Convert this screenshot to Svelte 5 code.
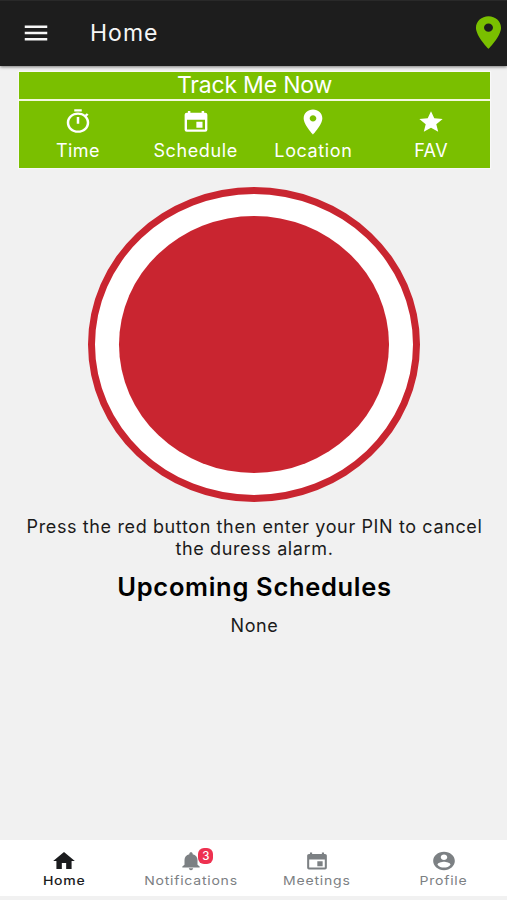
<script>
	const calendar =
		'M5.5 2.6h2v1.7h9V2.6h2v1.7H19.4q1.7 0 1.7 1.8v13.3q0 1.8-1.7 1.8H4.6q-1.7 0-1.7-1.8V6.1q0-1.8 1.7-1.8h.9zM4.8 10.4v8.8h14.4v-8.8zM12.3 12.3h4.9v5.3h-4.9z';
	const pin =
		'M12 2C8.13 2 5 5.13 5 9c0 5.25 7 13 7 13s7-7.75 7-13c0-3.87-3.13-7-7-7zm0 9.5c-1.38 0-2.5-1.12-2.5-2.5s1.12-2.5 2.5-2.5 2.5 1.12 2.5 2.5-1.12 2.5-2.5 2.5z';

	const actions = [
		{
			label: 'Time',
			name: 'time',
			path: 'M15 1H9v2h6V1zm-4 13h2V8h-2v6zm8.03-6.61l1.42-1.42c-.43-.51-.9-.99-1.41-1.41l-1.42 1.42C16.07 4.74 14.12 4 12 4c-4.97 0-9 4.03-9 9s4.02 9 9 9 9-4.03 9-9c0-2.12-.74-4.07-1.97-5.61zM12 20c-3.87 0-7-3.13-7-7s3.13-7 7-7 7 3.13 7 7-3.13 7-7 7z'
		},
		{ label: 'Schedule', name: 'schedule', path: calendar },
		{ label: 'Location', name: 'location', path: pin },
		{
			label: 'FAV',
			name: 'fav',
			path: 'M12 17.27L18.18 21l-1.64-7.03L22 9.24l-7.19-.61L12 2 9.19 8.63 2 9.24l5.46 4.73L5.82 21z'
		}
	];

	const tabs = [
		{ label: 'Home', name: 'home', path: 'M10 20v-6h4v6h5v-8h3L12 3 2 12h3v8z' },
		{
			label: 'Notifications',
			name: 'notifications',
			badge: 3,
			path: 'M12 22c1.1 0 2-.9 2-2h-4c0 1.1.89 2 2 2zm6-6v-5c0-3.07-1.64-5.64-4.5-6.32V4c0-.83-.67-1.5-1.5-1.5s-1.5.67-1.5 1.5v.68C7.63 5.36 6 7.92 6 11v5l-2 2v1h16v-1l-2-2z'
		},
		{ label: 'Meetings', name: 'meetings', path: calendar },
		{
			label: 'Profile',
			name: 'profile',
			path: 'M12 2C6.48 2 2 6.48 2 12s4.48 10 10 10 10-4.48 10-10S17.52 2 12 2zm0 3c1.66 0 3 1.34 3 3s-1.34 3-3 3-3-1.34-3-3 1.34-3 3-3zm0 14.2c-2.5 0-4.71-1.28-6-3.22.03-1.99 4-3.08 6-3.08 1.99 0 5.97 1.09 6 3.08-1.29 1.94-3.5 3.22-6 3.22z'
		}
	];

	let active = 'home';
</script>

<div class="screen">
	<header>
		<svg class="menu" viewBox="0 0 24 24"><path d="M3 18h18v-2H3v2zm0-5h18v-2H3v2zm0-7v2h18V6H3z" /></svg>
		<h1>Home</h1>
		<svg class="pin" viewBox="0 0 24 24" preserveAspectRatio="none"><path d={pin} /></svg>
	</header>

	<main>
		<section class="track">
			<div class="track-title"><span>Track Me Now</span></div>
			<div class="actions">
				{#each actions as action}
					<div class="action {action.name}">
						<div class="action-icon">
							<svg viewBox="0 0 24 24" preserveAspectRatio="none">
								<path fill-rule="evenodd" d={action.path} />
							</svg>
						</div>
						<span>{action.label}</span>
					</div>
				{/each}
			</div>
		</section>

		<div class="alarm">
			<div class="alarm-button"></div>
		</div>

		<p class="hint">Press the red button then enter your PIN to cancel<br />the duress alarm.</p>
		<h2>Upcoming Schedules</h2>
		<p class="none">None</p>
	</main>

	<nav>
		{#each tabs as tab}
			<div class="tab {tab.name}" class:active={active === tab.name}>
				<div class="tab-icon">
					<svg viewBox="0 0 24 24" preserveAspectRatio="none">
						<path fill-rule="evenodd" d={tab.path} />
					</svg>
					{#if tab.badge}
						<b class="badge">{tab.badge}</b>
					{/if}
				</div>
				<span>{tab.label}</span>
			</div>
		{/each}
	</nav>
</div>

<style>
	:global(body) {
		background: #f1f1f1;
	}

	.screen {
		display: flex;
		flex-direction: column;
		box-sizing: border-box;
		height: 900px;
		padding-bottom: 4px;
		overflow: hidden;
		background: #f1f1f1;
		color: #1b1b1b;
		font-family: Inter, Roboto, sans-serif;
	}

	h1,
	h2,
	p {
		margin: 0;
		font-weight: 400;
	}

	svg {
		display: block;
		fill: currentColor;
	}

	header {
		display: flex;
		align-items: center;
		box-sizing: border-box;
		height: 66px;
		flex-shrink: 0;
		padding: 0 0 2px 20.5px;
		background: #1d1d1d;
		border-top: 1px solid #292929;
		box-shadow: 0 1px 3px rgba(0, 0, 0, 0.5);
		color: #f6f6f6;
	}

	.menu {
		width: 30px;
		height: 30px;
	}

	h1 {
		margin-left: 39.5px;
		font-size: 23px;
		letter-spacing: 1px;
	}

	.pin {
		width: 43px;
		height: 39px;
		margin-left: auto;
		margin-right: -2.5px;
		color: #7abf00;
	}

	main {
		flex: 1;
		text-align: center;
	}

	.track {
		box-sizing: border-box;
		width: 471px;
		height: 96px;
		margin: 6px 0 0 19px;
		background: #7abf00;
		color: #fff;
		box-shadow: 0 0 1px 1px #f8f8f8;
	}

	.track-title {
		height: 27px;
		border-bottom: 2px solid #f2f8dd;
		font-size: 23px;
		letter-spacing: -0.2px;
		line-height: 27px;
	}

	.actions {
		display: grid;
		grid-template-columns: repeat(4, 1fr);
	}

	.action {
		display: flex;
		flex-direction: column;
		align-items: center;
		padding-top: 5px;
		font-size: 18px;
		letter-spacing: 0.6px;
		line-height: 28px;
	}

	.time,
	.fav {
		letter-spacing: 0.4px;
	}

	.action-icon {
		display: flex;
		align-items: center;
		height: 31px;
	}

	.action-icon svg {
		width: 30px;
		height: 27px;
	}

	.location svg {
		width: 32px;
		height: 30px;
	}

	.fav svg {
		width: 28px;
		height: 26px;
	}

	.alarm {
		display: flex;
		align-items: center;
		justify-content: center;
		box-sizing: border-box;
		width: 332px;
		height: 315px;
		margin: 19px 0 0 88.4px;
		border: 7.5px solid #c92530;
		border-radius: 50%;
		background: #fff;
	}

	.alarm-button {
		width: 270px;
		height: 257px;
		border-radius: 50%;
		background: #c92530;
	}

	.hint {
		margin: 14px 0 0 2px;
		font-size: 18px;
		letter-spacing: 0.62px;
		line-height: 22px;
	}

	h2 {
		margin: 11px 0 0 2px;
		color: #000;
		font-size: 25.5px;
		font-weight: 600;
		letter-spacing: 0.68px;
		line-height: 32px;
	}

	.none {
		margin: 12px 0 0 2px;
		font-size: 18px;
		letter-spacing: 0.6px;
		line-height: 22px;
	}

	nav {
		display: grid;
		grid-template-columns: repeat(4, 1fr);
		height: 56px;
		padding-left: 1px;
		background: #fff;
		color: #7c8083;
	}

	.tab {
		display: flex;
		flex-direction: column;
		align-items: center;
		padding-top: 9px;
		font-size: 12px;
		line-height: 16px;
	}

	.tab span {
		transform: scaleX(1.17);
		letter-spacing: 0.65px;
	}

	.active {
		color: #1b1c1e;
		font-weight: 500;
	}

	.tab-icon {
		position: relative;
		display: flex;
		align-items: center;
		height: 24px;
	}

	.tab-icon svg {
		width: 26px;
		height: 22px;
	}

	.home .tab-icon svg {
		height: 24px;
	}

	.badge {
		position: absolute;
		top: -1px;
		left: 20.5px;
		width: 15px;
		height: 16px;
		border-radius: 6px;
		background: #ee3150;
		color: #fff;
		font-size: 11.5px;
		font-weight: 500;
		line-height: 16px;
		text-align: center;
	}
</style>
